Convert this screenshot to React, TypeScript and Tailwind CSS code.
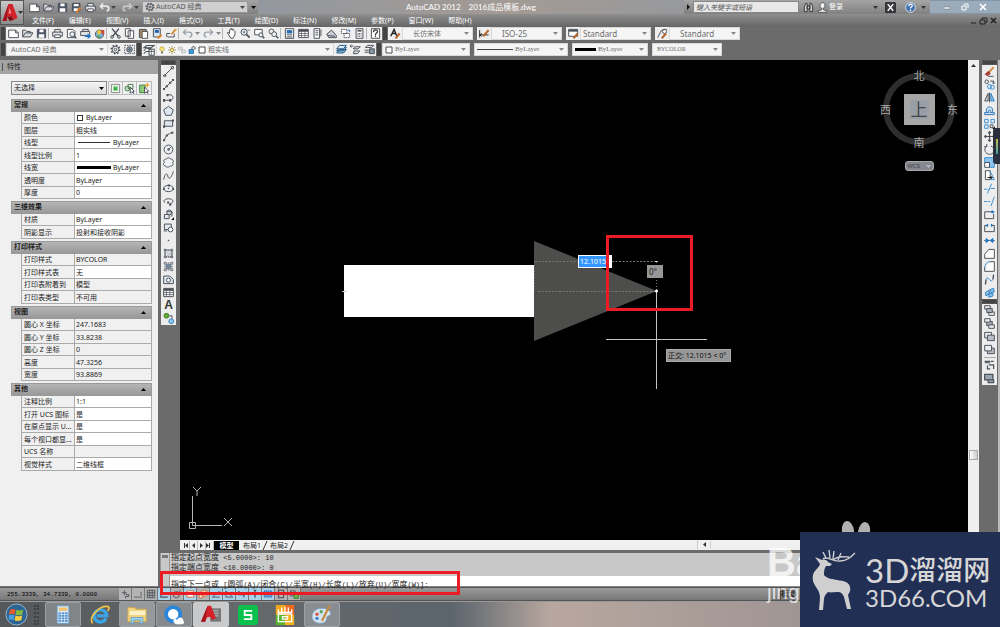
import { useState } from "react";
import type { ReactNode } from "react";
import { clsx } from "clsx";

const Svg = ({ children, size = 11 }: { children: ReactNode; size?: number }) => (
  <svg
    width={size}
    height={size}
    viewBox="0 0 16 16"
    fill="none"
    stroke="#4b4f57"
    strokeWidth="1.4"
    className="shrink-0">
    {children}
  </svg>
);

// all glyphs share a 16x16 grid
const icons: Record<string, ReactNode> = {
  new: <path d="M1 3h10l4 4v7H1zM11 3v4h4" fill="#fff" />,
  open: <path d="M1 13V3h4l2 2h5v3M1 13l4-6h11l-4 6z" fill="#d8dce0" />,
  save: (
    <>
      <path d="M2 2h12v12H2z" fill="#4b5768" />
      <path d="M5 2h6v4H5zM4 9h8v5H4z" fill="#fff" stroke="none" />
    </>
  ),
  saveAs: (
    <>
      <path d="M2 2h11v11H2z" fill="#4b5768" />
      <path d="M4 3h7v3H4zM4 9h6v4H4z" fill="#fff" stroke="none" />
      <path d="M8 15l6-7" stroke="#d9822b" strokeWidth="3" />
    </>
  ),
  print: (
    <>
      <path d="M4 6V2h8v4M1 6h14v6H1z" fill="#e4e6e8" />
      <path d="M4 10h8v4H4z" fill="#fff" />
    </>
  ),
  preview: (
    <>
      <path d="M2 2h8l3 3v9H2z" fill="#fff" />
      <circle cx="9" cy="9" r="3.5" fill="#e8f2fa" />
      <path d="M12 12l3 3" strokeWidth="2" />
    </>
  ),
  publish: (
    <>
      <path d="M4 5V2h8v3M1 5h13v6H1z" fill="#dfe1e3" />
      <path d="M7 12h7M11 9l4 3-4 3" stroke="#1976c9" strokeWidth="2" />
    </>
  ),
  dwf: (
    <>
      <circle cx="8" cy="9" r="6" fill="#79b8e2" />
      <path d="M4 5l4-3 3 5-5 3z" fill="#f3c23c" stroke="none" />
      <path d="M10 3h5v6h-4z" fill="#cc4a3a" stroke="none" />
      <path d="M4 11h5v3H6z" fill="#57a454" stroke="none" />
    </>
  ),
  cut: (
    <>
      <path d="M3 1l9 11M13 1L4 12" strokeWidth="2" />
      <circle cx="3" cy="13" r="2" />
      <circle cx="13" cy="13" r="2" />
    </>
  ),
  copy: <path d="M2 1h7v11H2zM6 4h8v11H6z" fill="#fff" />,
  paste: (
    <>
      <path d="M2 2h10v12H2z" fill="#a98b60" />
      <path d="M6 5h8v10H6z" fill="#fff" />
    </>
  ),
  match: (
    <>
      <path d="M2 1h10v12H2z" fill="#dce9f5" />
      <path d="M4 3h6v4H4z" fill="#1d5fa8" stroke="none" />
      <path d="M8 15l6-5" stroke="#d9822b" strokeWidth="3" />
    </>
  ),
  block: (
    <>
      <path d="M2 13h10V8M1 13V8h5" />
      <path d="M8 9l6-7" stroke="#d9822b" strokeWidth="2.4" />
      <path d="M12 1l2 2 2-1" stroke="#e6a92a" />
    </>
  ),
  undo: <path d="M6 2L2 6l4 4M2 6h8c6 0 5 7 1 7" stroke="#9aa2ad" strokeWidth="2" />,
  redo: <path d="M10 2l4 4-4 4M14 6H6C0 6 1 13 5 13" stroke="#9aa2ad" strokeWidth="2" />,
  quickUndo: <path d="M6 2L2 6l4 4M2 6h8c6 0 5 7 1 7" stroke="#e4e7eb" strokeWidth="2.4" />,
  quickRedo: <path d="M10 2l4 4-4 4M14 6H6C0 6 1 13 5 13" stroke="#c3c7cc" strokeWidth="2.4" />,
  pan: <path d="M4 10L2 7l1-1 2 2V3l1-1 1 1V1h2v2l2-1 1 2 1 1v5l-3 5H7z" fill="#fff" />,
  zoom: (
    <>
      <circle cx="6" cy="6" r="4.5" fill="#eef3f7" />
      <path d="M9 9l5 5" strokeWidth="2.4" />
      <path d="M6 4v4M4 6h4M11 3h4" strokeWidth="1" />
    </>
  ),
  zoomWin: (
    <>
      <path d="M1 2h11v8H1z" fill="#fff" />
      <circle cx="10" cy="10" r="3" fill="#eef3f7" />
      <path d="M12 12l3 3" strokeWidth="2.2" />
    </>
  ),
  zoomPrev: (
    <>
      <circle cx="5" cy="5" r="3.5" />
      <circle cx="9" cy="9" r="3.5" fill="#eef3f7" />
      <path d="M12 12l3 3" strokeWidth="2.2" />
    </>
  ),
  props: (
    <>
      <path d="M2 1h12v14H2z" fill="#fff" />
      <path d="M4 3h8v5H4z" fill="#2f6db3" stroke="none" />
      <path d="M4 10h8M4 13h8" />
    </>
  ),
  table: (
    <>
      <path d="M1 2h14v12H1z" fill="#fff" />
      <path d="M1 4h14" strokeWidth="3" />
      <path d="M1 8h14M1 11h14M5 4v10M10 4v10" strokeWidth="1" />
    </>
  ),
  palette: (
    <>
      <path d="M3 1h8v14H3z" fill="#fff" />
      <path d="M5 4h4M5 7h4M5 10h4M13 2v10" />
    </>
  ),
  sheet: (
    <>
      <path d="M1 9l7-6 7 8v3H4z" fill="#c9ced4" />
      <path d="M3 11l10 1" />
    </>
  ),
  markup: (
    <>
      <path d="M2 2h8v6H2zM6 8h8v6H6z" fill="#fff" strokeDasharray="2 1" />
      <path d="M11 3h3v3" stroke="#2f6db3" />
    </>
  ),
  calc: (
    <>
      <path d="M3 1h10v14H3z" fill="#fff" />
      <path d="M5 4h6" strokeWidth="2.4" />
      <path d="M5 8h6M5 10h6M5 12h6" strokeDasharray="1.5 1" />
    </>
  ),
  help: (
    <>
      <path d="M2 1h12v14H2z" fill="#fff" />
      <path d="M5 6c0-4 6-4 6-1 0 2-3 2-3 5M8 11v2" stroke="#333" strokeWidth="1.8" />
    </>
  ),
  textStyle: (
    <>
      <path d="M1 12L6 2l4 10M3 8h6" stroke="#222" strokeWidth="2" />
      <path d="M8 15l6-7" stroke="#b5652b" strokeWidth="3" />
    </>
  ),
  dimStyle: (
    <>
      <path d="M1 3v11M1 10h13M1 10l3-2M1 10l3 2" stroke="#222" />
      <path d="M6 12l8-9" stroke="#b5652b" strokeWidth="3" />
    </>
  ),
  tableStyle: (
    <>
      <path d="M1 2h13v10H1z" fill="#fff" />
      <path d="M1 4h13" strokeWidth="2.6" />
      <path d="M8 15l6-7" stroke="#b5652b" strokeWidth="3" />
    </>
  ),
  leader: (
    <>
      <path d="M1 14L6 4l4-2h4" />
      <circle cx="11" cy="5" r="3" fill="#fff" />
      <path d="M7 15l6-7" stroke="#b5652b" strokeWidth="3" />
    </>
  ),
  gear: (
    <>
      <circle cx="8" cy="8" r="6.2" strokeWidth="2" strokeDasharray="2.4 2.4" />
      <circle cx="8" cy="8" r="4.8" />
      <circle cx="8" cy="8" r="1.8" />
    </>
  ),
  gearBox: (
    <>
      <path d="M1 2h14v12H1z" strokeDasharray="2 1.4" />
      <circle cx="8" cy="8" r="4" fill="#8aa0b5" />
      <circle cx="8" cy="8" r="1" />
    </>
  ),
  layers: (
    <>
      <path d="M5 2h10l-4 3H1zM5 6h6M1 9l3-3M1 13l3-3h4" fill="#e8ecef" />
      <path d="M8 7h7v8H8z" fill="#fff" />
      <path d="M8 10h7M11 7v8" strokeWidth="1" />
    </>
  ),
  bulb: (
    <>
      <circle cx="8" cy="6" r="4.5" fill="#fbe87a" stroke="#b59b3c" />
      <path d="M6 11h4v4H6z" fill="#777" stroke="none" />
    </>
  ),
  sun: (
    <>
      <circle cx="8" cy="8" r="3.5" fill="#fbe87a" stroke="#8a6d25" />
      <path d="M8 0v3M8 13v3M0 8h3M13 8h3M2 2l2 2M12 12l2 2M14 2l-2 2M2 14l2-2" stroke="#8a6d25" />
    </>
  ),
  frozen: <path d="M1 2h8v6H1zM7 8h8v6H7z" stroke="#b9bcc0" fill="#ddd" />,
  lock: (
    <>
      <path d="M2 7h9v8H2z" fill="#3b9ad9" stroke="#1d5f94" />
      <path d="M8 7V4c0-4 6-4 6 0v3" stroke="#444" strokeWidth="2" />
    </>
  ),
  swatch: <path d="M2 2h12v12H2z" fill="#fff" stroke="#222" strokeWidth="1.6" />,
  layerCur: (
    <>
      <path d="M5 8h10l-4 5H1zM5 5h10l-4 5H1z" fill="#8cc6ee" stroke="#27557d" />
      <path d="M5 2h10l-4 5H1z" fill="#dcecf8" stroke="#27557d" />
    </>
  ),
  layerPrev: <path d="M0 3h5M2 1L0 3l2 2M7 4h8l-3 3H5zM6 10h8l-3 4H5z" fill="#e6e9ec" />,
  layerState: (
    <>
      <path d="M5 2h9l-3 3H2zM1 9h6M1 12h6" fill="#e6e9ec" />
      <path d="M8 7h7v7H8z" fill="#8795a5" />
    </>
  ),
  line: <path d="M3 13L13 3M1 13h3v2H1zM12 1h3v3h-3z" />,
  xline: (
    <>
      <path d="M1 15L15 1" />
      <path d="M4 9h3v3H4zM9 4h3v3H9zM0 13h3v3H0zM13 0h3v3h-3z" fill="#4b4f57" stroke="none" />
    </>
  ),
  pline: (
    <>
      <path d="M2 12h8c6 0 6-8 0-8H6" />
      <path d="M0 10h3v4H0zM5 3h3v3H5zM9 10h3v4H9z" fill="#4b4f57" stroke="none" />
    </>
  ),
  polygon: <path d="M8 2l7 5-3 8H4L1 7z" fill="#dfe7ef" />,
  rect: (
    <>
      <path d="M2 4h12v8H2z" fill="#dfe7ef" />
      <path d="M0 11h3v3H0zM13 2h3v3h-3z" fill="#4b4f57" stroke="none" />
    </>
  ),
  arc: (
    <>
      <path d="M2 14C3 8 7 4 14 2" />
      <path d="M0 12h3v3H0zM4 5h3v3H4zM12 1h3v3h-3z" fill="#4b4f57" stroke="none" />
    </>
  ),
  circle: (
    <>
      <circle cx="8" cy="8" r="6.4" fill="#edf1f5" />
      <path d="M7 7h2v2H7zM8 8l4-4" />
    </>
  ),
  cloud: <path d="M5 3c2-3 5-2 6 0 4 0 5 3 3 5 2 4-1 6-4 5-2 3-5 2-6 0-4 0-4-4-2-5-2-3 0-5 3-5z" fill="#edf1f5" />,
  spline: <path d="M1 14c2-10 5-10 6-5s5 4 8-7" />,
  ellipse: (
    <>
      <ellipse cx="8" cy="8" rx="6.5" ry="4.5" fill="#edf1f5" />
      <path d="M7 7h2v2H7zM0 7h2v3H0zM14 7h2v3h-2zM7 2h3v3H7z" fill="#4b4f57" stroke="none" />
    </>
  ),
  ellArc: (
    <>
      <path d="M3 10c-4-3 0-6 5-6s9 3 5 6l-3 2" />
      <path d="M6 8h3v3H6zM9 11h3v3H9z" fill="#4b4f57" stroke="none" />
    </>
  ),
  insert: (
    <>
      <path d="M2 8h7v6H2zM5 4h8v7" fill="#dfe7ef" />
      <circle cx="9" cy="5" r="3.5" />
      <path d="M12 16h4v-4z" fill="#000" stroke="none" />
    </>
  ),
  makeBlock: (
    <>
      <path d="M2 3h10v8H2z" fill="#dfe7ef" />
      <circle cx="11" cy="11" r="3.4" fill="#fff" />
      <path d="M1 13h5" />
    </>
  ),
  point: <path d="M7 7h2v2H7z" fill="#4b4f57" stroke="none" />,
  hatch: (
    <>
      <path d="M3 3h10v10H3zM1 3h14M1 13h14M3 1v14M13 1v14" strokeDasharray="2 1" />
      <path d="M5 12l7-7M5 8l3-3M8 12l4-4" stroke="#9aa2ad" />
    </>
  ),
  gradient: (
    <>
      <path d="M1 3h14M1 13h14M3 1v14M13 1v14" strokeDasharray="2 1" />
      <path d="M4 4h8v8H4z" fill="#75859a" stroke="none" />
    </>
  ),
  region: (
    <>
      <path d="M1 3h9l5 5v6H1z" fill="#dfe7ef" />
      <circle cx="8" cy="9" r="3" fill="#fff" />
    </>
  ),
  addSel: (
    <>
      <circle cx="5" cy="4" r="3.5" fill="#5fae3c" stroke="#3e7b26" />
      <circle cx="12" cy="12" r="3.5" fill="#8cc6ee" stroke="#3a83ba" />
      <path d="M9 4h4v4" />
    </>
  ),
  erase: (
    <>
      <path d="M6 10l8-8" stroke="#d08b3b" strokeWidth="3" />
      <path d="M2 12l4-4 3 3-4 3z" fill="#c43c2c" stroke="#86271c" />
      <path d="M6 15h8" />
    </>
  ),
  copyObj: (
    <>
      <circle cx="4" cy="4" r="2.6" />
      <circle cx="8" cy="11" r="3" stroke="#3b8fd0" />
      <circle cx="12" cy="12" r="3" stroke="#3b8fd0" />
      <path d="M9 3h5v4M12 5l2 2 2-2" />
    </>
  ),
  mirror: (
    <>
      <path d="M6 2v11H1z" fill="#ddd" />
      <path d="M10 2v11h5z" fill="#8cc6ee" stroke="#2c7dbf" />
      <path d="M8 1v14" />
    </>
  ),
  offset: (
    <>
      <path d="M1 14h14v-3h-3c4-11-12-11-8 0H1z" stroke="#2f77b5" fill="#cfe2f2" />
      <path d="M4 11h3c-3-5 5-5 2 0h3" stroke="#2f77b5" />
    </>
  ),
  array: (
    <>
      <path d="M1 2h5v5H1zM10 2h5v5h-5zM1 10h5v5H1z" stroke="#3b8fd0" />
      <path d="M9 10h4v4H9z" />
      <path d="M12 16h4v-4z" fill="#000" stroke="none" />
    </>
  ),
  move: <path d="M8 1v14M1 8h14M6 3l2-2 2 2M6 13l2 2 2-2M3 6L1 8l2 2M13 6l2 2-2 2" strokeWidth="1.7" />,
  rotate: <path d="M4 3C-2 8 3 15 8 15c8 0 9-10 2-12M4 0v4H0" />,
  scale: (
    <>
      <path d="M1 1h14v14H8V8H1z" fill="#8cc6ee" stroke="#3b8fd0" />
      <path d="M1 8h7v7H1z" fill="#fff" />
    </>
  ),
  stretch: (
    <>
      <path d="M2 1h7v13H2z" fill="#fff" />
      <path d="M9 2l6 12H9" stroke="#3b8fd0" />
      <path d="M5 11h7M10 9l2 2-2 2" stroke="#111" />
    </>
  ),
  trim: <path d="M0 9h5M7 9h2M10 8h6M5 15l6-14" stroke="#3b8fd0" />,
  extend: <path d="M0 8h5M6 8h3M10 15l5-14" stroke="#3b8fd0" />,
  breakPt: (
    <>
      <path d="M11 4H1v10h13V7" />
      <path d="M10 4h5M12 2v4" stroke="#1976c9" strokeWidth="2" />
    </>
  ),
  break: (
    <>
      <path d="M5 5H1v9h14V5h-4" />
      <path d="M4 5h2M10 5h2M5 3v4M11 3v4" stroke="#1976c9" strokeWidth="2" />
    </>
  ),
  join: (
    <>
      <path d="M0 8h16" stroke="#777" />
      <path d="M3 5l4 3-4 3zM13 5L9 8l4 3z" fill="#1976c9" stroke="#1976c9" />
    </>
  ),
  chamfer: <path d="M1 15V9l6-7h8v13z" fill="#fff" />,
  fillet: (
    <>
      <path d="M1 15V9M8 1h7v14H1" fill="#fff" />
      <path d="M1 10C1 4 5 1 10 1" stroke="#3b8fd0" />
    </>
  ),
  blend: (
    <>
      <path d="M2 15l1-7M13 8l1-7" strokeWidth="2" />
      <path d="M3 8c3-8 5 7 10 0" stroke="#3b8fd0" />
    </>
  ),
  explode: <path d="M2 8l5-3 1 4-5 4zM8 4l6-2 1 5-5 1zM7 10l6-1v4l-6 2z" fill="#8cc6ee" stroke="#2c7dbf" />,
  front: (
    <>
      <path d="M1 1h8v5H1zM7 10h8v5H7z" fill="#eee" />
      <path d="M4 5h8v6H4z" fill="#a9afb8" />
    </>
  ),
  back: (
    <>
      <path d="M4 5h8v6H4z" fill="#a9afb8" />
      <path d="M1 1h8v5H1zM7 10h8v5H7z" fill="#eee" />
    </>
  ),
  above: (
    <>
      <path d="M1 2h10v8H1z" fill="#eceef0" />
      <path d="M5 6h10v8H5z" fill="#b9bfc8" />
    </>
  ),
  under: (
    <>
      <path d="M5 6h10v8H5z" fill="#b9bfc8" />
      <path d="M1 2h10v8H1z" fill="#eceef0" />
    </>
  ),
  textFront: <path d="M1 2h8M1 4h8M7 7h7v6M5 8v5h4M10 2h4" strokeWidth="1.7" />,
  hatchBack: <path d="M1 2h12v8H1zM6 11v3h8V9" fill="#9aa5b2" strokeWidth="1.8" />,
  selAdd: (
    <>
      <path d="M2 2h12v12H2z" stroke="#888" fill="#fff" />
      <path d="M5 5h6v6H5z" fill="#2fa838" stroke="#9ed6a2" strokeWidth="2" />
    </>
  ),
  selPick: (
    <>
      <circle cx="5" cy="8" r="3.5" fill="#c5e5c4" stroke="#487e48" />
      <path d="M6 2h7v6H6z" stroke="#487e48" />
      <path d="M9 6v9l2-2 3 2-1-3h2z" fill="#fff" />
    </>
  ),
  selQuick: (
    <>
      <path d="M1 3h8v11H1z" fill="#8ccb74" stroke="#487e48" />
      <path d="M8 6v9l2-2 3 2-1-3h2z" fill="#fff" />
      <path d="M12 0v6M9 3h6" stroke="#f0a52a" strokeWidth="2" />
    </>
  ),
  binocular: <path d="M2 14V7l2-5h2v12zM10 14V2h2l2 5v7zM6 6h4v4H6z" fill="#ddd" stroke="#333" />,
  user: <path d="M8 1c5 0 4 8 1 8v2l5 2v2H2v-2l5-2V9C4 9 3 1 8 1z" fill="#f4f4f4" stroke="#555" />,
  exchange: (
    <>
      <path d="M1 1h14v14H1z" fill="#3a3d42" stroke="#222" />
      <path d="M4 3l4 5-4 5M12 3L8 8l4 5" stroke="#fff" strokeWidth="2" />
    </>
  ),
  helpRound: (
    <>
      <circle cx="8" cy="8" r="7" fill="#3e6fae" stroke="#dfe6ee" />
      <path d="M5.5 6c0-3.5 5-3.5 5-.6 0 2-2.5 2-2.5 4M8 11v2" stroke="#fff" strokeWidth="1.9" />
    </>
  ),
  snapInfer: <path d="M7 2v8M3 6h8M9 9h5v3H9v3" />,
  snap: <path d="M2 13h11V3" strokeDasharray="2 1.4" strokeWidth="2" />,
  grid: <path d="M2 2h12v12H2zM6 2v12M10 2v12M2 6h12M2 10h12" />,
  ortho: <path d="M3 2v11h11" strokeWidth="1.8" />,
  polar: (
    <>
      <circle cx="7" cy="9" r="5" />
      <path d="M7 9l7-7" />
    </>
  ),
  osnap: <path d="M3 3h11v10H3z" fill="#fff" stroke="#d9662b" />,
  osnap3d: <path d="M5 3h9v8H5zM2 9h6v5H2z" fill="#fff" stroke="#d9662b" />,
  track: <path d="M2 13L14 3M2 13h12" />,
  ducs: <path d="M3 3v10h11L3 3z" />,
  dyn: <path d="M3 3v6h8v4" strokeWidth="2" />,
  lwt: <path d="M8 2v12M6 2h4" strokeWidth="2" />,
  tpy: <path d="M2 3h12v10H2z" fill="#5e9fe0" stroke="#2d63a0" strokeDasharray="2 1" />,
  qp: <path d="M4 2h8v12H4zM4 6h8" strokeWidth="1.8" />,
  sc: (
    <>
      <path d="M2 3h8v8H2z" />
      <path d="M8 7h7v8H8z" fill="#63b84d" stroke="#3e7b26" />
    </>
  ),
};

const Ico = ({ name, size }: { name: string; size?: number }) => (
  <Svg size={size}>{icons[name]}</Svg>
);

const Arrow = ({ className }: { className?: string }) => (
  <svg width="5" height="3" viewBox="0 0 5 3" className={clsx("shrink-0 fill-current", className)}>
    <path d="M0 0h5L2.5 3z" />
  </svg>
);

const Tool = ({ name, size }: { name: string; size?: number }) => (
  <button
    aria-label={name}
    className="flex h-[13px] w-[14px] shrink-0 items-center justify-center hover:bg-sky-200">
    <Ico name={name} size={size} />
  </button>
);

const Sep = () => <span className="mr-px h-[11px] w-px shrink-0 bg-[#b4b4b4]" />;

const Grip = () => <span className="h-[13px] w-[6px] shrink-0 border-x border-[#6b6b6b] bg-[#444]" />;

const Drop = ({
  label,
  value,
  className,
  textClass = "text-[7px]",
  children,
}: {
  label: string;
  value: string;
  className?: string;
  textClass?: string;
  children?: ReactNode;
}) => (
  <label
    className={clsx(
      "flex h-[13px] shrink-0 items-center gap-[2px] border border-[#d8d8d8] bg-[#f5f5f5] pr-[3px] text-[#6d6d6d]",
      className
    )}>
    {children}
    <select
      aria-label={label}
      className={clsx("h-[11px] min-w-0 flex-1 appearance-none bg-transparent leading-[11px] outline-none", textClass)}>
      <option>{value}</option>
    </select>
    <Arrow className="text-[#888]" />
  </label>
);

const menus = [
  "文件(F)",
  "编辑(E)",
  "视图(V)",
  "插入(I)",
  "格式(O)",
  "工具(T)",
  "绘图(D)",
  "标注(N)",
  "修改(M)",
  "参数(P)",
  "窗口(W)",
  "帮助(H)",
];

const stdTools = [
  ["new", "open", "save"],
  ["print", "preview", "publish", "dwf"],
  ["cut", "copy", "paste", "match", "block"],
  ["undo", "", "redo", ""],
  ["pan", "zoom", "zoomWin", "zoomPrev"],
  ["props", "table", "palette", "sheet", "markup", "calc"],
  ["help"],
];

const drawTools = [
  "line",
  "xline",
  "pline",
  "polygon",
  "rect",
  "arc",
  "circle",
  "cloud",
  "spline",
  "ellipse",
  "ellArc",
  "insert",
  "makeBlock",
  "point",
  "hatch",
  "gradient",
  "region",
  "table",
];

const modifyTools = [
  "erase",
  "copyObj",
  "mirror",
  "offset",
  "array",
  "move",
  "rotate",
  "scale",
  "stretch",
  "trim",
  "extend",
  "breakPt",
  "break",
  "join",
  "chamfer",
  "fillet",
  "blend",
  "explode",
];

type Row = { name: string; value: string; mark?: "swatch" | "thin" | "thick"; locked?: boolean };

const sections: { title: string; rows: Row[] }[] = [
  {
    title: "常规",
    rows: [
      { name: "颜色", value: "ByLayer", mark: "swatch" },
      { name: "图层", value: "粗实线" },
      { name: "线型", value: "ByLayer", mark: "thin" },
      { name: "线型比例", value: "1" },
      { name: "线宽", value: "ByLayer", mark: "thick" },
      { name: "透明度", value: "ByLayer" },
      { name: "厚度", value: "0" },
    ],
  },
  {
    title: "三维效果",
    rows: [
      { name: "材质", value: "ByLayer" },
      { name: "阴影显示", value: "投射和接收阴影" },
    ],
  },
  {
    title: "打印样式",
    rows: [
      { name: "打印样式", value: "BYCOLOR", locked: true },
      { name: "打印样式表", value: "无" },
      { name: "打印表附着到", value: "模型", locked: true },
      { name: "打印表类型", value: "不可用", locked: true },
    ],
  },
  {
    title: "视图",
    rows: [
      { name: "圆心 X 坐标", value: "247.1683", locked: true },
      { name: "圆心 Y 坐标", value: "33.8238", locked: true },
      { name: "圆心 Z 坐标", value: "0", locked: true },
      { name: "高度", value: "47.3256", locked: true },
      { name: "宽度", value: "93.8869", locked: true },
    ],
  },
  {
    title: "其他",
    rows: [
      { name: "注释比例", value: "1:1" },
      { name: "打开 UCS 图标", value: "是" },
      { name: "在原点显示 U...", value: "是" },
      { name: "每个视口都显...", value: "是" },
      { name: "UCS 名称", value: "", locked: true },
      { name: "视觉样式", value: "二维线框" },
    ],
  },
];

const Header = () => (
  <header className="flex h-[27px] shrink-0 bg-[#777]">
    <button
      aria-label="AutoCAD"
      className="flex h-[25px] w-6 items-center justify-center border border-[#555] bg-linear-to-b from-[#c9c9c9] to-[#8b8b8b] text-[#333]">
      <svg width="16" height="20" viewBox="0 0 15 20">
        <path d="M0 18L6 1h4l5 14-4 2-2-4-4 1-1 4z" fill="#d3222a" />
        <path d="M6 1l-2 17-4 0z" fill="#a3141c" />
        <path d="M7 5l2 5-3 1z" fill="#ef8f8f" />
        <path d="M5 14l4-1 2 4-4 1z" fill="#7b1015" />
      </svg>
      <Arrow />
    </button>
    <div className="flex min-w-0 flex-1 flex-col">
      <div className="flex h-[14px] items-center bg-linear-to-r from-[#8496a8] via-[#a39a94] to-[#7f96ab]">
        <div className="flex h-full w-[234px] shrink-0 items-center bg-linear-to-b from-[#a5a5a5] to-[#808080] pl-[3px] text-[#444]">
          <Tool name="new" />
          <Tool name="open" />
          <Tool name="save" />
          <Tool name="saveAs" />
          <Tool name="print" />
          <Tool name="quickUndo" />
          <Arrow className="mr-1" />
          <Tool name="quickRedo" />
          <Arrow className="mr-[3px]" />
          <label className="flex h-3 w-[106px] items-center gap-px border border-[#999] bg-[#cfcfcf] px-[2px]">
            <Ico name="gear" size={10} />
            <select
              aria-label="工作空间"
              className="h-[10px] min-w-0 flex-1 appearance-none text-[7px] leading-[10px] text-[#555]">
              <option>AutoCAD 经典</option>
            </select>
            <Arrow />
          </label>
          <Arrow className="ml-[3px] text-black" />
        </div>
        <div className="flex min-w-0 flex-1 justify-center gap-2 font-['Lato','Noto_Sans_CJK_SC',sans-serif] text-[8px] leading-[14px] whitespace-pre text-white">
          <span>AutoCAD 2012</span>
          <span>2016成品模板.dwg</span>
        </div>
        <div className="flex h-full w-[246px] shrink-0 items-center bg-linear-to-b from-[#a5a5a5] to-[#808080] text-[#333]">
          <svg width="9" height="6" viewBox="0 0 9 6">
            <path d="M3 0l3 3-3 3z" fill="#111" />
          </svg>
          <input
            aria-label="搜索"
            placeholder="键入关键字或短语"
            className="h-3 w-[106px] border border-[#888] bg-[#e8e8e8] px-[2px] text-[7px] italic outline-none placeholder:text-[#555]"
          />
          <div className="flex items-center pl-[2px]">
            <Tool name="binocular" />
            <Tool name="user" />
            <button className="text-[7px] text-white">登录</button>
          </div>
          <Arrow className="mr-[5px] ml-auto" />
          <Tool name="exchange" />
          <span className="w-[6px]" />
          <Tool name="helpRound" />
          <Arrow className="mx-1" />
        </div>
        <div className="flex h-3 w-[70px] shrink-0 items-center justify-between bg-white/20 px-[13px]">
          <button aria-label="最小化">
            <svg width="8" height="8" viewBox="0 0 8 8">
              <path d="M1 4h6v2H1z" fill="#fff" stroke="#667" strokeWidth=".5" />
            </svg>
          </button>
          <button aria-label="还原">
            <svg width="8" height="8" viewBox="0 0 8 8" fill="none" stroke="#fff">
              <path d="M3 1h4v4M1 3h4v4H1z" />
            </svg>
          </button>
          <button aria-label="关闭">
            <svg width="8" height="8" viewBox="0 0 8 8" fill="none" stroke="#fff" strokeWidth="1.6">
              <path d="M1 1l6 6M7 1L1 7" />
            </svg>
          </button>
        </div>
      </div>
      <nav className="flex h-[13px] items-center gap-[15px] bg-linear-to-b from-[#8f8f8f] to-[#666] pl-2 text-[7px] leading-[13px] text-white">
        {menus.map((item) => (
          <button key={item} className="whitespace-nowrap">
            {item}
          </button>
        ))}
        <svg width="28" height="8" viewBox="0 0 28 8" className="mr-[2px] ml-auto" fill="none" stroke="#222">
          <path d="M1 6h5M12 3V1h5v4h-2M10 3h5v4h-5z" />
          <path d="M21 1l5 5M26 1l-5 5" strokeWidth="1.6" />
        </svg>
      </nav>
    </div>
  </header>
);

const Toolbars = () => (
  <div className="flex h-[33px] shrink-0 flex-col gap-[3px] overflow-hidden bg-[#6b6b6b]">
    <div className="flex">
      <Grip />
      <div className="flex items-center bg-[#efefef]">
        {stdTools.map((group, i) => (
          <div key={i} className="flex items-center">
            {i > 0 && <Sep />}
            {group.map((name, j) =>
              name ? <Tool key={j} name={name} /> : <Arrow key={j} className="mx-px text-[#888]" />
            )}
          </div>
        ))}
      </div>
      <Grip />
      <div className="flex gap-1">
        <div className="flex bg-[#efefef]">
          <Tool name="textStyle" />
          <Drop label="文字样式" value="长仿宋体" className="w-[71px] pl-[10px]" />
        </div>
        <div className="flex bg-[#efefef]">
          <Tool name="dimStyle" />
          <Drop label="标注样式" value="ISO-25" className="w-[71px] pl-[10px]" textClass="text-[8px]" />
        </div>
        <div className="flex bg-[#efefef]">
          <Tool name="tableStyle" />
          <Drop label="表格样式" value="Standard" className="w-[71px] pl-[2px]" textClass="text-[8px]" />
        </div>
        <div className="flex bg-[#efefef]">
          <Tool name="leader" />
          <Drop label="多重引线样式" value="Standard" className="w-[71px] pl-[10px]" textClass="text-[8px]" />
        </div>
      </div>
    </div>
    <div className="flex">
      <Grip />
      <div className="flex bg-[#efefef]">
        <Drop label="工作空间" value="AutoCAD 经典" className="w-[102px] pl-1" />
        <Tool name="gear" />
        <Tool name="gearBox" />
      </div>
      <Grip />
      <div className="flex bg-[#efefef]">
        <Tool name="layers" size={12} />
        <Drop label="图层" value="粗实线" className="w-[178px] pl-px">
          <Ico name="bulb" size={8} />
          <Ico name="sun" size={8} />
          <Ico name="frozen" size={8} />
          <Ico name="lock" size={8} />
          <Ico name="swatch" size={8} />
        </Drop>
        <Tool name="layerCur" />
        <Tool name="layerPrev" />
        <Tool name="layerState" />
      </div>
      <Grip />
      <div className="flex gap-1 font-['Liberation_Serif',serif]">
        <Drop label="颜色" value="ByLayer" className="w-[88px] pl-[2px]">
          <Ico name="swatch" size={8} />
        </Drop>
        <Drop label="线型" value="ByLayer" className="w-[94px] pl-[2px]">
          <span className="h-px w-9 bg-[#444]" />
        </Drop>
        <Drop label="线宽" value="ByLayer" className="w-[76px] pl-[2px]">
          <span className="h-[3px] w-[21px] bg-black" />
        </Drop>
        <Drop label="打印样式" value="BYCOLOR" className="w-[70px] pl-1" textClass="text-[6px]" />
      </div>
    </div>
  </div>
);

const Section = ({ title, rows }: { title: string; rows: Row[] }) => {
  const [open, setOpen] = useState(true);
  return (
    <section className="mb-[2px]">
      <button
        onClick={() => setOpen(!open)}
        className="flex h-[13px] w-full items-center justify-between border border-[#999] bg-linear-to-b from-[#b5b5b5] to-[#999] pr-[5px] pl-[2px] text-[7px] font-bold text-[#222]">
        {title}
        <Arrow className={clsx("text-black", open && "rotate-180")} />
      </button>
      {open && (
        <table className="ml-[10px] w-[131px] table-fixed border-separate border-spacing-0 border-l border-[#aaa] text-[7px] leading-[11px]">
          <tbody>
            {rows.map((row) => (
              <tr key={row.name} className="odd:h-3 even:h-[13px]">
                <th
                  scope="row"
                  className="w-[53px] overflow-hidden border-r border-b border-[#aaa] p-0 pl-[2px] text-left font-normal whitespace-nowrap">
                  {row.name}
                </th>
                <td
                  className={clsx(
                    "border-r border-b border-[#aaa] p-0 pl-px whitespace-nowrap",
                    !row.locked && "bg-white"
                  )}>
                  <div className="flex h-[11px] items-center">
                    {row.mark === "swatch" && (
                      <span className="mr-[3px] ml-px h-[6px] w-[6px] border border-[#333] bg-white" />
                    )}
                    {row.mark === "thin" && <span className="mr-[3px] ml-[2px] h-px w-8 bg-[#333]" />}
                    {row.mark === "thick" && <span className="mr-[2px] ml-px h-[3px] w-[34px] bg-black" />}
                    {row.value}
                  </div>
                </td>
              </tr>
            ))}
          </tbody>
        </table>
      )}
    </section>
  );
};

const Properties = () => (
  <aside className="flex w-[158px] shrink-0 flex-col overflow-hidden border-b border-[#777] bg-[#f0f0f0] text-[#222]">
    <div className="flex h-[14px] shrink-0 items-center gap-1 bg-[#a3a3a3] pl-[2px] text-[7px]">
      <span className="h-2 w-px bg-[#555]" />
      特性
    </div>
    <div className="pt-[7px] pr-[6px] pl-[11px]">
      <div className="mb-1 flex h-[14px] justify-between">
        <label className="flex w-[96px] items-center border border-[#888] bg-linear-to-b from-[#f4f4f4] to-[#ddd] px-[2px]">
          <select
            aria-label="选择"
            className="h-3 min-w-0 flex-1 appearance-none text-[7px] leading-3 outline-none">
            <option>无选择</option>
          </select>
          <Arrow className="text-black" />
        </label>
        <div className="flex divide-x divide-[#bbb] border border-[#bbb]">
          <Tool name="selAdd" />
          <Tool name="selPick" />
          <Tool name="selQuick" />
        </div>
      </div>
      {sections.map((section) => (
        <Section key={section.title} {...section} />
      ))}
    </div>
  </aside>
);

const SideTools = ({ children }: { children: ReactNode }) => (
  <div className="flex w-[15px] flex-col items-center bg-[#ededed]">{children}</div>
);

const SideGrip = () => <span className="h-[5px] w-full border border-[#555] bg-[#444]" />;

const ViewCube = () => (
  <div className="absolute top-[9px] right-[9px] flex w-20 flex-col items-center">
    <div className="relative flex h-20 w-20 items-center justify-center text-[11px] leading-none text-[#aaa]">
      <span className="absolute inset-1 rounded-full border-[6px] border-[#2e2e2e]" />
      <span className="absolute top-px">北</span>
      <span className="absolute bottom-px">南</span>
      <span className="absolute left-px">西</span>
      <span className="absolute right-px">东</span>
      <button className="z-10 flex h-[31px] w-[31px] items-center justify-center border-[6px] border-[#a6a6a6] bg-[#999fa6] text-[17px] leading-none text-[#444]">
        上
      </button>
    </div>
    <button className="mt-3 flex h-[10px] w-[29px] items-center justify-between rounded-[3px] border border-[#aaa] bg-[#85878f] px-[2px] text-[6px] leading-none text-[#444]">
      WCS
      <Arrow className="text-[#b6bac4]" />
    </button>
  </div>
);

const Canvas = () => (
  <main className="relative min-h-0 flex-1 overflow-hidden bg-black">
    <svg width="788" height="480" className="absolute top-0 left-0" fill="none">
      <path d="M164 205h190v52H164z" fill="#fff" />
      <path d="M354 181v100l123-50z" fill="#4d4e4c" />
      <path d="M355 201.5h122M358 231.5h119" stroke="#777" strokeDasharray="2 1.5" />
      <path d="M354.5 202v30M476.5 202v28" stroke="#777" strokeDasharray="1 2" />
      <path d="M162 231.5h5M475 201.5h3" stroke="#ccc" />
      <path d="M476.5 230v99M426 279.5h101" stroke="#c4c4c4" />
      <circle cx="476.5" cy="231" r="1.5" fill="#fff" />
    </svg>
    <input
      aria-label="长度"
      defaultValue="12.1015"
      className="absolute top-[195px] left-[398px] h-[13px] w-[34px] border border-r-[3px] border-white bg-[#3397ff] px-px text-[7px] leading-[11px] text-white outline-none"
    />
    <span className="absolute top-[205px] left-[467px] h-[13px] w-4 bg-[#979797] pl-[2px] text-[8px] leading-[13px] text-[#222]">
      0°
    </span>
    <span className="absolute top-[289px] left-[486px] border border-[#aaa] bg-[#979797] pr-1 pl-px text-[7px] leading-[11px] whitespace-nowrap text-[#111]">
      正交: 12.1015 &lt; 0°
    </span>
    <span className="absolute top-[175px] left-[426px] h-[76px] w-[87px] border-[3px] border-[#ed1c24]" />
    <ViewCube />
    <svg width="50" height="50" className="absolute bottom-[3px] left-[8px]" fill="none" stroke="#b5b5b5">
      <path d="M4.5 36V9M7 38.5h27M1.5 35.5h6v6h-6zM4.5 36v2.5H8" />
      <path d="M36 31l8 8M44 31l-8 8M5 0l4 4 4-4M9 4v5" />
    </svg>
    <svg width="32" height="20" className="absolute right-[96px] bottom-0">
      <ellipse cx="8" cy="11" rx="6" ry="10" fill="#b0b0b0" transform="rotate(-8 8 11)" />
      <ellipse cx="24" cy="12" rx="6" ry="10" fill="#b0b0b0" transform="rotate(10 24 12)" />
    </svg>
  </main>
);

const LayoutTabs = () => (
  <div className="flex h-[10px] shrink-0 items-center bg-[#f0f0f0] text-[7px] leading-[9px] text-[#222]">
    <svg width="34" height="9" viewBox="0 0 34 9" fill="#333">
      <path d="M4 2h1v5H4zM8 2v5L5 4.5zM15 2v5l-3-2.500zM20 2v5l3-2.500zM26 2v5l3-2.500zM29 2h1v5h-1z" />
      <path d="M9 0h1v9H9zM17 0h1v9h-1zM25 0h1v9h-1zM33 0h1v9h-1z" fill="#bbb" />
    </svg>
    <button className="w-[25px] bg-black text-center font-bold text-white">模型</button>
    <button className="ml-1">布局1</button>
    <svg width="9" height="9" viewBox="0 0 9 9" stroke="#333">
      <path d="M2 9l4-9" />
    </svg>
    <button>布局2</button>
    <svg width="9" height="9" viewBox="0 0 9 9" stroke="#333">
      <path d="M2 9l4-9" />
    </svg>
    <svg width="14" height="8" viewBox="0 0 14 8" className="mr-[257px] ml-auto">
      <path d="M1 0h-1v8h1M14 0v8" stroke="#aaa" fill="none" />
      <path d="M9 1v5L6 3.500z" fill="#333" />
    </svg>
  </div>
);

// Latin runs are set one step smaller so that they take about half of a Han glyph
const CommandText = ({ text }: { text: string }) => (
  <span className="pl-px font-['Liberation_Mono','Noto_Sans_CJK_SC',monospace] text-[8px] whitespace-pre text-[#222]">
    {text.split(/([\x20-\x7e]+)/).map((part, i) => (
      <span key={i} className={i % 2 ? "text-[7px]" : undefined}>
        {part}
      </span>
    ))}
  </span>
);

const CommandLine = () => (
  <div className="relative z-10 ml-[2px] flex h-[34px] shrink-0 border-b border-[#888] bg-[#c8c8c8]">
    <div className="w-[10px] shrink-0 border-x border-[#999] pt-[2px]">
      <span className="mx-px block h-[3px] bg-[#777]" />
    </div>
    <div className="flex min-w-0 flex-1 flex-col leading-[9px]">
      <CommandText text="指定起点宽度 <5.0000>: 10" />
      <CommandText text="指定端点宽度 <10.0000>: 0" />
      <div className="mt-auto h-[10px] bg-white leading-[10px]">
        <CommandText text="指定下一点或 [圆弧(A)/闭合(C)/半宽(H)/长度(L)/放弃(U)/宽度(W)]:" />
      </div>
    </div>
    <span className="absolute top-[18px] left-0 h-[24px] w-[300px] border-[3px] border-[#ed1c24]" />
  </div>
);

const statusTools = [
  { name: "snapInfer" },
  { name: "snap" },
  { name: "grid" },
  { name: "ortho", on: true },
  { name: "polar" },
  { name: "osnap", on: true },
  { name: "osnap3d" },
  { name: "track", on: true },
  { name: "ducs", on: true },
  { name: "dyn", on: true },
  { name: "lwt", on: true },
  { name: "tpy", on: true },
  { name: "qp" },
  { name: "sc" },
];

const StatusBar = () => (
  <div className="flex h-[14px] shrink-0 items-center border-y border-[#555] bg-linear-to-b from-[#9a9a9a] to-[#787878]">
    <span className="w-[119px] pl-[7px] font-['Liberation_Mono',monospace] text-[6px] whitespace-nowrap text-black">
      255.3339, 34.7339, 0.0000
    </span>
    {statusTools.map(({ name, on }) => (
      <button
        key={name}
        aria-label={name}
        className={clsx(
          "flex h-3 w-[13px] items-center justify-center border-r border-[#777]",
          on ? "bg-[#a9d3ea]" : "bg-[#b4b4b4]"
        )}>
        <Ico name={name} size={10} />
      </button>
    ))}
    <span className="mr-[201px] ml-auto h-3 w-[19px] border-l border-[#444] text-[7px] leading-3 font-bold text-[#222]">
      模型
    </span>
  </div>
);

const apps: { name: string; frame?: string; art: ReactNode }[] = [
  {
    name: "计算器",
    frame: "border-[#9aa0a5] bg-white/25",
    art: (
      <>
        <path d="M5 1h14v21H5z" fill="#d6e8f7" stroke="#6a9cc8" />
        <path d="M7 3h10v4H7z" fill="#f5c26b" />
        <path d="M8 9v11M12 9v11M16 9v11" stroke="#4d8cc9" strokeWidth="3" strokeDasharray="2 1" />
      </>
    ),
  },
  {
    name: "Internet Explorer",
    art: (
      <>
        <path d="M19 16c-3 7-14 5-14-3 0-9 15-10 15 0H8" fill="none" stroke="#3aa6e8" strokeWidth="4" />
        <path d="M3 22C-2 14 12 0 22 2c2 1 0 4-1 5" fill="none" stroke="#f2c643" strokeWidth="2" />
      </>
    ),
  },
  {
    name: "资源管理器",
    frame: "border-[#9aa0a5] bg-white/35",
    art: (
      <>
        <path d="M1 3h8l2 2h12v15H1z" fill="#f0d37c" stroke="#cda94a" />
        <path d="M3 7h19v5H3z" fill="#fbf1c9" />
        <path d="M5 22v-7h14v7h-3v-4H8v4z" fill="#a4d3ef" stroke="#5d9fc9" />
      </>
    ),
  },
  {
    name: "QQ浏览器",
    frame: "border-[#9aa0a5] bg-white/25",
    art: (
      <>
        <circle cx="11" cy="11" r="8.5" fill="#fff" stroke="#2b86d9" strokeWidth="4.5" />
        <path d="M13 22c-4-3 0-7 3-4 1-5 8-3 7 1 3 1 1 4-1 4h-8z" fill="#fff" />
      </>
    ),
  },
  {
    name: "AutoCAD",
    frame: "border-[#ccc] bg-white/65",
    art: (
      <>
        <path d="M11 4h13v16H11z" fill="#777" />
        <path d="M14 7h7M14 10h7M14 13h7" stroke="#ccc" />
        <path d="M0 20L8 1h4l6 15-5 2-2-4-4 1-2 5z" fill="#d3222a" />
        <path d="M8 1L5 20H0z" fill="#a3141c" />
      </>
    ),
  },
  {
    name: "WPS",
    art: (
      <>
        <rect x="0" y="0" width="24" height="24" rx="4" fill="#0bc14d" />
        <path d="M17 7H8v5h8v5H7" fill="none" stroke="#fff" strokeWidth="2.2" />
      </>
    ),
  },
  {
    name: "看图",
    art: (
      <>
        <path d="M1 0h11v12H1z" fill="#f3a61d" />
        <path d="M12 0h11v12H12z" fill="#ef6a1f" />
        <path d="M1 12h11v12H1z" fill="#5bb531" />
        <path d="M12 12h11v12H12z" fill="#f5b41e" />
        <path
          d="M4 5v4h16V5M4 20v-9h16v9zM8 3v6M12 2v7M16 3v6M9 14h6v3H9z"
          stroke="#fff"
          strokeWidth="1.6"
          fill="none"
        />
      </>
    ),
  },
  {
    name: "画图",
    frame: "border-[#9aa0a5] bg-white/25",
    art: (
      <>
        <path d="M12 4c10 0 13 8 8 9-4 1-1 4-4 7-4 4-16 2-16-6C0 8 5 4 12 4z" fill="#d3e3ef" stroke="#7f9fb8" />
        <circle cx="6" cy="11" r="2" fill="#d9503f" />
        <circle cx="11" cy="8" r="2" fill="#57a454" />
        <circle cx="6" cy="16" r="2" fill="#3f7fd0" />
        <path d="M12 19L21 1" stroke="#c98a3d" strokeWidth="2.6" />
      </>
    ),
  },
];

const Taskbar = () => (
  <footer className="flex h-[26px] shrink-0 items-center border-t border-[#999] bg-linear-to-r from-[#5a646c] from-45% via-[#b8a79f] via-55% to-[#8b878a]">
    <div className="flex h-full w-[490px] shrink-0 items-center bg-linear-to-r from-[#54585b] via-[#65696c] to-transparent">
      <button aria-label="开始" className="ml-[5px]">
        <svg width="23" height="23" viewBox="0 0 24 24">
          <circle cx="12" cy="12" r="11" fill="#2c6594" stroke="#9db7ca" />
          <path d="M5 8c2-2 4-2 6-1l-1 5c-2-1-4-1-6 0z" fill="#ea5a2b" />
          <path d="M12 7c2 1 4 1 7 0l-1 5c-3 1-5 1-7 0z" fill="#83bd3a" />
          <path d="M4 13c2-1 4-1 6 0l-1 5c-2-1-4-1-5 0z" fill="#4a9fdd" />
          <path d="M11 13c2 1 4 1 7 0l-1 5c-3 1-5 1-7 0z" fill="#f7cb3c" />
        </svg>
      </button>
      <span className="mx-[6px] h-5 w-[5px] border-x-2 border-dotted border-[#3c3f42]" />
      <div className="flex h-full gap-px">
        {apps.map(({ name, frame, art }) => (
          <button
            key={name}
            aria-label={name}
            className={clsx(
              "flex h-full w-9 items-center justify-center rounded-[2px] border",
              frame ?? "border-transparent"
            )}>
            <svg width="20" height="20" viewBox="0 0 24 24">
              {art}
            </svg>
          </button>
        ))}
      </div>
    </div>
  </footer>
);

const Badge = () => (
  <div className="fixed right-0 bottom-0 z-30 flex h-[95px] w-[200px] items-center gap-[9px] bg-[#222f55] pl-3 text-[#d6d6d6]">
    <svg width="44" height="60" viewBox="0 0 44 60" fill="#cfcfcf" className="shrink-0">
      <path d="M3 7l7 3c2-1 5 0 6 2l4 2-2 2h-4c-2 3-2 6-2 9 3 4 9 4 13 5 7 1 12 2 13 7 1 4-1 6-2 8l3 14h-4l-3-12c-1-3-3-5-6-5-4 0-7 1-10 0-2 2-4 4-4 7l-1 11H7l1-12c0-5-2-8-4-11-3-4-4-8-3-12 1-5 6-7 7-11z" />
      <path
        d="M11 9C15 5 20 12 28 11c7 0 11-4 15-8M14 8l-3-6M18 8l-1-8M21 9l1-8M26 10l3-7M21 10c6-5 12-3 16-3"
        fill="none"
        stroke="#cfcfcf"
        strokeWidth="1.4"
      />
    </svg>
    <div className="flex flex-col pt-1 whitespace-nowrap">
      <p className="flex items-center text-[27px] leading-8 font-medium">
        <span className="font-['Lato',sans-serif] text-[33px] font-normal">3D</span>
        溜溜网
      </p>
      <p className="font-['Lato',sans-serif] text-[24px] leading-6">3D66.COM</p>
    </div>
  </div>
);

const App = () => {
  return (
    <div
      lang="zh-CN"
      className="relative flex h-screen min-h-[600px] flex-col overflow-hidden bg-[#6b6b6b] font-['Noto_Sans','Noto_Sans_CJK_SC',sans-serif]">
      <Header />
      <Toolbars />
      <div className="flex min-h-0 flex-1">
        <Properties />
        <div className="flex min-w-0 flex-1 flex-col">
          <div className="mb-[3px] flex min-h-0 flex-1">
            <div className="w-[22px] shrink-0 pl-[3px]">
              <SideTools>
                <SideGrip />
                {drawTools.map((name) => (
                  <Tool key={name} name={name} />
                ))}
                <button className="h-[13px] font-['Liberation_Sans',sans-serif] text-[12px] leading-[13px] font-bold text-[#333]">
                  A
                </button>
                <Tool name="addSel" />
              </SideTools>
            </div>
            <div className="flex min-w-0 flex-1 flex-col">
              <Canvas />
              <LayoutTabs />
            </div>
            <div className="flex w-[11px] shrink-0 flex-col items-center bg-[#efefef] pt-1">
              <Arrow className="rotate-180 text-[#333]" />
              <span className="mt-auto mb-[90px] h-[10px] w-[9px] border border-[#aaa] bg-linear-to-r from-white to-[#ccc]" />
            </div>
            <div className="w-[21px] shrink-0 border-r-2 border-[#bbb] pl-[3px]">
              <SideTools>
                <SideGrip />
                {modifyTools.map((name) => (
                  <Tool key={name} name={name} />
                ))}
                <SideGrip />
                <Tool name="front" />
                <Tool name="back" />
                <Tool name="above" />
                <Tool name="under" />
                <span className="my-px h-px w-3 bg-[#aaa]" />
                <Tool name="textFront" />
                <Tool name="hatchBack" />
              </SideTools>
            </div>
          </div>
          <CommandLine />
        </div>
      </div>
      <StatusBar />
      <Taskbar />
      <span className="absolute top-[128px] right-0 flex h-9 w-[7px] items-center justify-center rounded-l-[3px] bg-[#2b2e3c]">
        <span className="h-[15px] w-[2px] bg-linear-to-b from-[#c9b63a] to-[#27a3a0]" />
      </span>
      <div className="absolute right-[160px] bottom-[23px] z-20 flex w-[73px] flex-col whitespace-nowrap text-white/75">
        <span className="font-['Liberation_Sans',sans-serif] text-[40px] leading-9 font-bold">Ba</span>
        <span className="font-['Liberation_Sans',sans-serif] text-[21px] leading-6">jing</span>
      </div>
      <Badge />
    </div>
  );
};

export default App;
